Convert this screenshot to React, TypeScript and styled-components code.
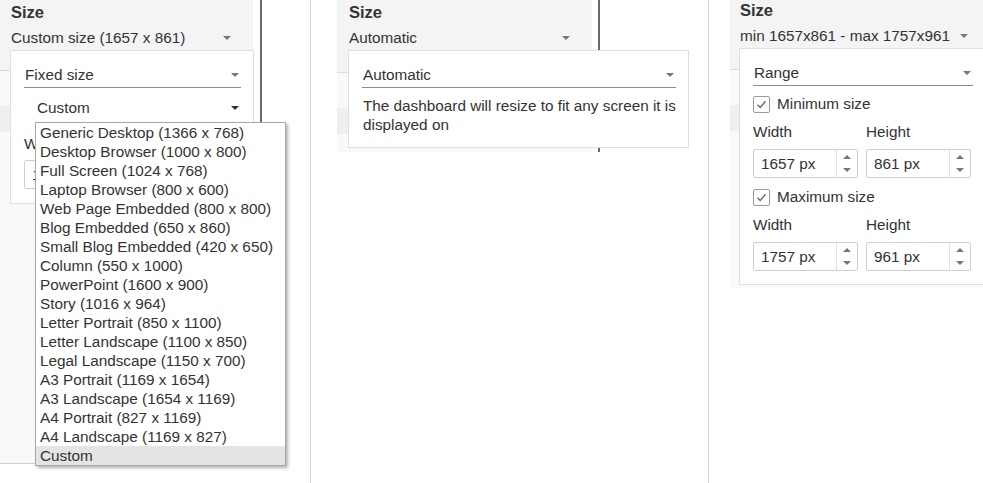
import styled, { createGlobalStyle } from 'styled-components'

const GlobalStyle = createGlobalStyle`
  body {
    margin: 0;
    background: #fff;
    font-family: 'Liberation Sans', Arial, sans-serif;
    color: #333;
  }
`

const Page = styled.div`
  display: flex;
  width: 983px;
  height: 483px;
  overflow: hidden;
  font-size: 15.3px;
`

const Shot = styled.div<{ $w: number; $pad: number; $last?: boolean }>`
  position: relative;
  flex: none;
  box-sizing: border-box;
  width: ${({ $w }) => $w}px;
  height: 483px;
  padding-left: ${({ $pad }) => $pad}px;
  display: flex;
  align-items: flex-start;
  border-right: ${({ $last }) => ($last ? 'none' : '1px solid #d4d4d4')};
`

const Sidebar = styled.div<{ $w: number; $h: number; $bottom?: boolean }>`
  flex: none;
  box-sizing: border-box;
  width: ${({ $w }) => $w}px;
  height: ${({ $h }) => $h}px;
  background: #f9f9f9;
  display: flex;
  flex-direction: column;
  border-bottom: ${({ $bottom }) => ($bottom ? '1px solid #cfcfcf' : 'none')};
`

const SideHead = styled.div<{ $h: number; $top: number; $left: number }>`
  box-sizing: border-box;
  height: ${({ $h }) => $h}px;
  padding: ${({ $top }) => $top}px 20px 0 ${({ $left }) => $left}px;
  background: #f4f4f4;
  border-bottom: 1px solid #dadada;
`

const Title = styled.div`
  font-size: 16.5px;
  font-weight: bold;
  line-height: 20px;
  color: #333;
`

const HeadSelect = styled.div`
  display: flex;
  align-items: center;
  justify-content: space-between;
  margin-top: 6px;
  line-height: 20px;
  color: #333;
`

const Band = styled.div`
  height: 26px;
  margin-top: 35px;
  background: #efefef;
`

const Splitter = styled.div<{ $h: number; $gap: number }>`
  flex: none;
  width: 2px;
  height: ${({ $h }) => $h}px;
  margin-left: ${({ $gap }) => $gap}px;
  background: #686868;
`

const Caret = styled.span<{ $dark?: boolean }>`
  flex: none;
  width: 0;
  height: 0;
  border-left: 4px solid transparent;
  border-right: 4px solid transparent;
  border-top: 4px solid ${({ $dark }) => ($dark ? '#333' : '#777')};
  margin-right: 2px;
`

const Popup = styled.div<{ $x: number; $y: number; $w: number; $h: number }>`
  position: absolute;
  left: ${({ $x }) => $x}px;
  top: ${({ $y }) => $y}px;
  width: ${({ $w }) => $w}px;
  height: ${({ $h }) => $h}px;
  box-sizing: border-box;
  padding: 11px 12px 0 13px;
  background: #fff;
  border: 1px solid #e0e0e0;
  display: flex;
  flex-direction: column;
  align-items: stretch;
`

const Select = styled.div<{ $line?: boolean; $indent?: number; $mt?: number; $w?: number }>`
  display: flex;
  align-items: center;
  justify-content: space-between;
  height: 25px;
  width: ${({ $w }) => ($w ? `${$w}px` : 'auto')};
  padding-left: ${({ $indent }) => $indent ?? 1}px;
  margin-top: ${({ $mt }) => $mt ?? 0}px;
  border-bottom: 1px solid ${({ $line }) => ($line ? '#8c8c8c' : 'transparent')};
  color: #333;
`

const Desc = styled.div`
  margin-top: 8px;
  padding-left: 1px;
  line-height: 19px;
  color: #333;
`

const Label = styled.div<{ $mt: number }>`
  margin-top: ${({ $mt }) => $mt}px;
  line-height: 20px;
  color: #333;
`

const CheckRow = styled.label<{ $mt: number }>`
  display: flex;
  align-items: center;
  gap: 7px;
  margin-top: ${({ $mt }) => $mt}px;
  height: 20px;
  color: #333;
`

const Box = styled.span`
  display: flex;
  align-items: center;
  justify-content: center;
  box-sizing: border-box;
  width: 17px;
  height: 17px;
  border: 1px solid #9a9a9a;
  border-radius: 2px;
  background: #fff;
`

const FieldGrid = styled.div<{ $mt: number }>`
  display: grid;
  grid-template-columns: 105px 105px;
  column-gap: 8px;
  margin-top: ${({ $mt }) => $mt}px;
`

const Field = styled.div`
  box-sizing: border-box;
  height: 29px;
  display: flex;
  border: 1px solid #cfcfcf;
  border-radius: 2px;
  background: #fff;
`

const FieldValue = styled.div`
  flex: 1;
  display: flex;
  align-items: center;
  padding-left: 7px;
  color: #333;
`

const Spinner = styled.div`
  flex: none;
  width: 21px;
  border-left: 1px solid #e2e2e2;
  display: flex;
  flex-direction: column;
  align-items: center;
  justify-content: space-between;
  padding: 5px 0;
  box-sizing: border-box;
`

const Arrow = styled.span<{ $up?: boolean }>`
  width: 0;
  height: 0;
  border-left: 4px solid transparent;
  border-right: 4px solid transparent;
  ${({ $up }) => ($up ? 'border-bottom: 4px solid #777;' : 'border-top: 4px solid #777;')}
`

const List = styled.div`
  position: absolute;
  left: 35px;
  top: 122px;
  width: 251px;
  box-sizing: border-box;
  background: #fff;
  border: 1px solid #a9a9a9;
  box-shadow: 2px 2px 3px rgba(0, 0, 0, 0.3);
`

const ListItem = styled.div<{ $active?: boolean }>`
  height: 19px;
  line-height: 19px;
  padding-left: 4px;
  white-space: nowrap;
  color: #333;
  background: ${({ $active }) => ($active ? '#e4e4e4' : 'transparent')};
`

const presets = [
  'Generic Desktop (1366 x 768)',
  'Desktop Browser (1000 x 800)',
  'Full Screen (1024 x 768)',
  'Laptop Browser (800 x 600)',
  'Web Page Embedded (800 x 800)',
  'Blog Embedded (650 x 860)',
  'Small Blog Embedded (420 x 650)',
  'Column (550 x 1000)',
  'PowerPoint (1600 x 900)',
  'Story (1016 x 964)',
  'Letter Portrait (850 x 1100)',
  'Letter Landscape (1100 x 850)',
  'Legal Landscape (1150 x 700)',
  'A3 Portrait (1169 x 1654)',
  'A3 Landscape (1654 x 1169)',
  'A4 Portrait (827 x 1169)',
  'A4 Landscape (1169 x 827)',
  'Custom',
]

const Check = () => (
  <Box>
    <svg width="11" height="11" viewBox="0 0 11 11">
      <path d="M1.5 5.8 L4.2 8.5 L9.5 2.2" fill="none" stroke="#666" strokeWidth="1.4" />
    </svg>
  </Box>
)

const NumberField = ({ value, spin = true }: { value: string; spin?: boolean }) => (
  <Field>
    <FieldValue>{value}</FieldValue>
    {spin && (
      <Spinner>
        <Arrow $up />
        <Arrow />
      </Spinner>
    )}
  </Field>
)

const App = () => (
  <Page>
    <GlobalStyle />

    <Shot $w={311} $pad={0}>
      <Sidebar $w={253} $h={464} $bottom>
        <SideHead $h={71} $top={2} $left={11}>
          <Title>Size</Title>
          <HeadSelect>
            Custom size (1657 x 861)
            <Caret />
          </HeadSelect>
        </SideHead>
        <Band />
      </Sidebar>
      <Splitter $h={465} $gap={7} />
      <Popup $x={10} $y={50} $w={244} $h={154}>
        <Select $line>
          Fixed size
          <Caret />
        </Select>
        <Select $indent={13} $mt={7}>
          Custom
          <Caret $dark />
        </Select>
        {/* the rest of this form lies under the open list */}
        <Label $mt={13}>W</Label>
        <FieldGrid $mt={6}>
          <NumberField value="1" spin={false} />
        </FieldGrid>
      </Popup>
      <List>
        {presets.map((p, i) => (
          <ListItem key={p} $active={i === presets.length - 1}>
            {p}
          </ListItem>
        ))}
      </List>
    </Shot>

    <Shot $w={398} $pad={26}>
      <Sidebar $w={255} $h={152}>
        <SideHead $h={73} $top={2} $left={12}>
          <Title>Size</Title>
          <HeadSelect>
            Automatic
            <Caret />
          </HeadSelect>
        </SideHead>
        <Band />
      </Sidebar>
      <Splitter $h={152} $gap={6} />
      <Popup $x={37} $y={50} $w={341} $h={98}>
        <Select $line>
          Automatic
          <Caret />
        </Select>
        <Desc>The dashboard will resize to fit any screen it is displayed on</Desc>
      </Popup>
    </Shot>

    <Shot $w={274} $pad={21} $last>
      <Sidebar $w={260} $h={288}>
        <SideHead $h={70} $top={0} $left={10}>
          <Title>Size</Title>
          <HeadSelect>
            min 1657x861 - max 1757x961
            <Caret />
          </HeadSelect>
        </SideHead>
        <Band />
      </Sidebar>
      <Popup $x={30} $y={48} $w={260} $h={237}>
        <Select $line $w={219}>
          Range
          <Caret />
        </Select>
        <CheckRow $mt={8}>
          <Check />
          Minimum size
        </CheckRow>
        <FieldGrid $mt={8}>
          <Label $mt={0}>Width</Label>
          <Label $mt={0}>Height</Label>
        </FieldGrid>
        <FieldGrid $mt={7}>
          <NumberField value="1657 px" />
          <NumberField value="861 px" />
        </FieldGrid>
        <CheckRow $mt={9}>
          <Check />
          Maximum size
        </CheckRow>
        <FieldGrid $mt={8}>
          <Label $mt={0}>Width</Label>
          <Label $mt={0}>Height</Label>
        </FieldGrid>
        <FieldGrid $mt={7}>
          <NumberField value="1757 px" />
          <NumberField value="961 px" />
        </FieldGrid>
      </Popup>
    </Shot>
  </Page>
)

export default App
